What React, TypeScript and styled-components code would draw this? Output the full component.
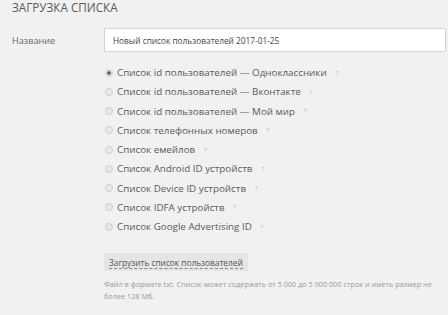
import React from "react";
import styled, { createGlobalStyle } from "styled-components";

const Global = createGlobalStyle`
  html, body { margin: 0; padding: 0; background: #f1f1f1; }
  body { font-family: "Open Sans", "Noto Sans", sans-serif; color: #555; }
`;

const Page = styled.div`
  width: 448px;
  height: 315px;
  overflow: hidden;
  padding: 0 0 0 12px;
  box-sizing: border-box;
`;

const Title = styled.h1`
  margin: 0;
  font-size: 11.7px;
  font-weight: 400;
  color: #5a5a5a;
  line-height: 14px;
`;

const Row = styled.div`
  display: grid;
  grid-template-columns: 92px 1fr;
  align-items: center;
  margin-top: 14px;
`;

const Label = styled.label`
  font-size: 9.1px;
  color: #666;
`;

const Input = styled.div`
  height: 22px;
  margin-right: 2px;
  border: 1px solid #d6d6d6;
  background: #fff;
  font-size: 8.3px;
  color: #444;
  display: flex;
  align-items: center;
  padding-left: 8px;
`;

const Options = styled.div`
  margin-left: 92px;
  margin-top: 11px;
  display: flex;
  flex-direction: column;
`;

const Option = styled.div`
  display: flex;
  align-items: center;
  height: 19.25px;
  font-size: 9.8px;
  color: #5a5a5a;
`;

const Radio = styled.span<{ $checked?: boolean }>`
  width: 6px;
  height: 6px;
  border-radius: 50%;
  border: 1px solid #cdcdcd;
  background: ${(p) => (p.$checked ? "radial-gradient(circle, #666 0 1.5px, #e8e8e8 2.2px)" : "#e8e8e8")};
  margin-right: 4px;
  margin-left: 1px;
  flex: none;
`;

const Hint = styled.span`
  font-size: 6px;
  color: #b0b0b0;
  margin-left: 9px;
`;

const Button = styled.button`
  margin-top: 17px;
  align-self: flex-start;
  background: #e5e5e5;
  border: none;
  height: 18px;
  padding: 0 5px;
  font-family: "Open Sans", "Noto Sans", sans-serif;
  font-size: 8.3px;
  color: #555;
  span { border-bottom: 1px dashed #888; line-height: 10px; }
`;

const Note = styled.p`
  margin: 7px 0 0;
  font-size: 7.3px;
  line-height: 12px;
  color: #9a9a9a;
  white-space: nowrap;
`;

const items: [string, boolean][] = [
  ["Список id пользователей — Одноклассники", true],
  ["Список id пользователей — Вконтакте", false],
  ["Список id пользователей — Мой мир", false],
  ["Список телефонных номеров", false],
  ["Список емейлов", false],
  ["Список Android ID устройств", false],
  ["Список Device ID устройств", false],
  ["Список IDFA устройств", false],
  ["Список Google Advertising ID", false],
];

export default function App() {
  return (
    <Page>
      <Global />
      <Title>ЗАГРУЗКА СПИСКА</Title>
      <Row>
        <Label>Название</Label>
        <Input>Новый список пользователей 2017-01-25</Input>
      </Row>
      <Options>
        {items.map(([t, c]) => (
          <Option key={t}>
            <Radio $checked={c} />
            {t}
            <Hint>?</Hint>
          </Option>
        ))}
        <Button>
          <span>Загрузить список пользователей</span>
        </Button>
        <Note>
          Файл в формате txt. Список может содержать от 5 000 до 5 000 000 строк и иметь размер не
          <br />
          более 128 Мб.
        </Note>
      </Options>
    </Page>
  );
}
